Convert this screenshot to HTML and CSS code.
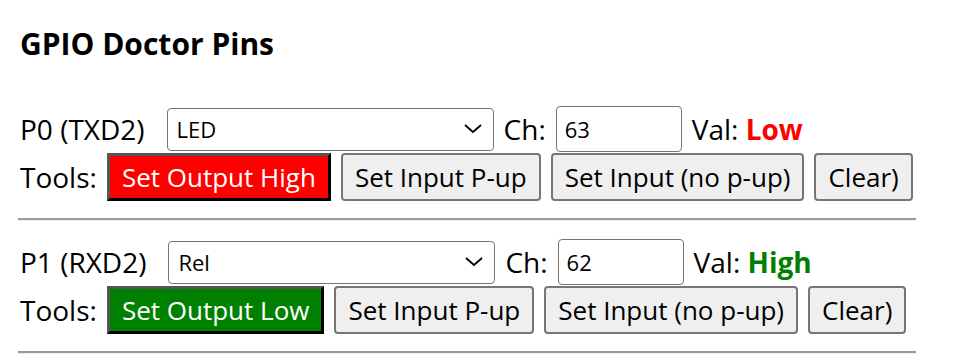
FILE: index.html
```html
<!DOCTYPE html>
<html lang="en">
<head>
  <meta charset="UTF-8">
  <meta name="viewport" content="width=device-width, initial-scale=1.0">
  <title>GPIO Doctor Pins</title>
  <link rel="stylesheet" href="styles.css">
</head>
<body>
  <div class="page">
    <h3>GPIO Doctor Pins</h3>

    <!-- P0 -->
    <div class="pin">
      <div class="pin-row">
        <span class="pin-name">P0 (TXD2)</span>
        <select class="pin-role">
          <option selected>LED</option>
          <option>Rel</option>
          <option>Button</option>
        </select>
        <span>Ch:</span>
        <input type="text" class="pin-ch" value="63">
        <span>Val: <b class="val val-low">Low</b></span>
      </div>
      <div class="pin-row">
        <span>Tools:</span>
        <button class="tool tool-high">Set Output High</button>
        <button class="tool">Set Input P-up</button>
        <button class="tool">Set Input (no p-up)</button>
        <button class="tool">Clear)</button>
      </div>
    </div>
    <hr>

    <!-- P1 -->
    <div class="pin">
      <div class="pin-row">
        <span class="pin-name">P1 (RXD2)</span>
        <select class="pin-role">
          <option>LED</option>
          <option selected>Rel</option>
          <option>Button</option>
        </select>
        <span>Ch:</span>
        <input type="text" class="pin-ch" value="62">
        <span>Val: <b class="val val-high">High</b></span>
      </div>
      <div class="pin-row">
        <span>Tools:</span>
        <button class="tool tool-low">Set Output Low</button>
        <button class="tool">Set Input P-up</button>
        <button class="tool">Set Input (no p-up)</button>
        <button class="tool">Clear)</button>
      </div>
    </div>
    <hr>
  </div>
</body>
</html>
```

FILE: styles.css
```css
body {
  font-family: "Open Sans", "Noto Sans", sans-serif;
  font-size: 28px;
  margin: 0;
  padding: 0;
  background-color: #ffffff;
  color: #000000;
}

.page {
  width: 898px;
  margin-left: 18px;
}

h3 {
  font-size: 30px;
  font-weight: bold;
  margin: 23px 0 0 2px;
  line-height: 41px;
}

.pin {
  display: flex;
  flex-direction: column;
  gap: 1px;
  margin-top: 42px;
}

hr + .pin {
  margin-top: 18px;
}

.pin-row {
  display: flex;
  align-items: center;
  gap: 10px;
  padding-left: 2px;
  min-height: 46px;
  white-space: nowrap;
}

.pin-row > * {
  flex-shrink: 0;
}

.pin-name {
  margin-right: 12px;
}

.pin-role {
  -webkit-appearance: none;
  appearance: none;
  width: 327px;
  height: 43px;
  font-family: inherit;
  font-size: 22px;
  padding: 0 40px 0 9px;
  border: 1px solid #767676;
  border-radius: 4px;
  background-color: #ffffff;
  background-image: url("data:image/svg+xml,%3Csvg xmlns='http://www.w3.org/2000/svg' width='18' height='10' viewBox='0 0 18 10'%3E%3Cpath d='M1 1l8 7 8-7' fill='none' stroke='%23000' stroke-width='1.8'/%3E%3C/svg%3E");
  background-repeat: no-repeat;
  background-position: right 11px center;
  color: #000000;
}

.pin-ch {
  width: 126px;
  height: 46px;
  box-sizing: border-box;
  font-family: inherit;
  font-size: 22px;
  padding: 0 8px;
  border: 1px solid #767676;
  border-radius: 4px;
}

.val {
  font-weight: bold;
}

.val-low {
  color: #ff0000;
}

.val-high {
  color: #008000;
}

.tool {
  height: 48px;
  font-family: inherit;
  font-size: 26px;
  padding: 0 12px;
  background-color: #efefef;
  color: #000000;
  border: 2px solid #767676;
  border-radius: 4px;
}

.tool-high,
.tool-low {
  color: #ffffff;
  border: 3px solid;
  border-color: #555555 #000000 #000000 #555555;
  border-radius: 0;
}

.tool-high {
  background-color: #ff0000;
}

.tool-low {
  background-color: #008000;
}

hr {
  height: 0;
  margin: 17px 0 0;
  border: 0;
  border-top: 2px solid #9a9a9a;
  border-bottom: 1px solid #eeeeee;
}
```
